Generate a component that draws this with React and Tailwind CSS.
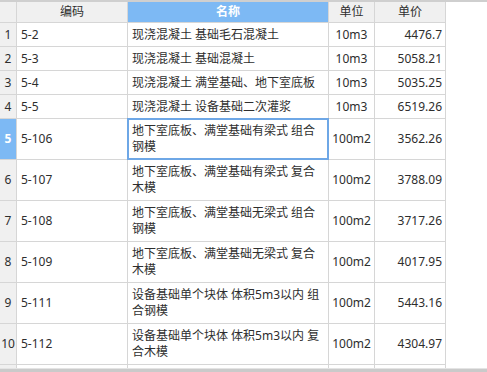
import React from 'react';

const rows = [
  { n: 1, code: '5-2', name: ['现浇混凝土 基础毛石混凝土'], unit: '10m3', price: '4476.7' },
  { n: 2, code: '5-3', name: ['现浇混凝土 基础混凝土'], unit: '10m3', price: '5058.21' },
  { n: 3, code: '5-4', name: ['现浇混凝土 满堂基础、地下室底板'], unit: '10m3', price: '5035.25' },
  { n: 4, code: '5-5', name: ['现浇混凝土 设备基础二次灌浆'], unit: '10m3', price: '6519.26' },
  { n: 5, code: '5-106', name: ['地下室底板、满堂基础有梁式 组合', '钢模'], unit: '100m2', price: '3562.26', active: true },
  { n: 6, code: '5-107', name: ['地下室底板、满堂基础有梁式 复合', '木模'], unit: '100m2', price: '3788.09' },
  { n: 7, code: '5-108', name: ['地下室底板、满堂基础无梁式 组合', '钢模'], unit: '100m2', price: '3717.26' },
  { n: 8, code: '5-109', name: ['地下室底板、满堂基础无梁式 复合', '木模'], unit: '100m2', price: '4017.95' },
  { n: 9, code: '5-111', name: ['设备基础单个块体 体积5m3以内 组', '合钢模'], unit: '100m2', price: '5443.16' },
  { n: 10, code: '5-112', name: ['设备基础单个块体 体积5m3以内 复', '合木模'], unit: '100m2', price: '4304.97' },
];

const cell = 'flex items-center border-r border-[#d6d6d6] h-full';

function Row({ r }) {
  const tall = r.name.length > 1;
  return (
    <div className={`flex border-b border-[#d6d6d6] ${tall ? 'h-[41px]' : 'h-[24px]'}`}>
      <div
        className={`${cell} w-[17px] justify-center ${
          r.active ? 'bg-[#7db9f4] text-white font-bold' : 'bg-[#f0f0f0]'
        }`}
      >
        {r.n}
      </div>
      <div className={`${cell} w-[111px] pl-[4px]`}>{r.code}</div>
      <div className={`${cell} relative w-[201px] pl-[4px] whitespace-nowrap`}>
        <div className="flex flex-col">
          {r.name.map((line, i) => (
            <span key={i}>{line}</span>
          ))}
        </div>
        {r.active && <div className="absolute -inset-px z-10 border-2 border-[#6ea7e6]" />}
      </div>
      <div className={`${cell} w-[46px] justify-center`}>{r.unit}</div>
      <div className={`${cell} w-[71px] justify-end pr-[3px]`}>{r.price}</div>
    </div>
  );
}

export default function App() {
  return (
    <div className="w-[487px] h-[372px] flex flex-col overflow-hidden bg-white text-[12px] leading-[16px] text-[#2e2e2e] font-['Noto_Sans','Noto_Sans_CJK_SC',sans-serif]">
      <div className="h-[2px] bg-[#cfcfcf]" />
      <div className="flex-1 overflow-hidden">
        <div className="w-[446px]">
          <div className="flex h-[21px] border-b border-[#d6d6d6] bg-[#f0f0f0]">
            <div className={`${cell} w-[17px]`} />
            <div className={`${cell} w-[111px] justify-center`}>编码</div>
            <div className={`${cell} w-[201px] justify-center bg-[#7db9f4] text-white font-bold`}>名称</div>
            <div className={`${cell} w-[46px] justify-center`}>单位</div>
            <div className={`${cell} w-[71px] justify-center`}>单价</div>
          </div>
          {rows.map((r) => (
            <Row key={r.n} r={r} />
          ))}
          <div className="flex h-[41px]">
            <div className={`${cell} w-[17px] bg-[#f0f0f0]`} />
            <div className={`${cell} w-[111px]`} />
            <div className={`${cell} w-[201px]`} />
            <div className={`${cell} w-[46px]`} />
            <div className={`${cell} w-[71px]`} />
          </div>
        </div>
      </div>
      <div className="h-[4px] border-t border-[#e4e4e4] bg-[#cacaca]" />
    </div>
  );
}
